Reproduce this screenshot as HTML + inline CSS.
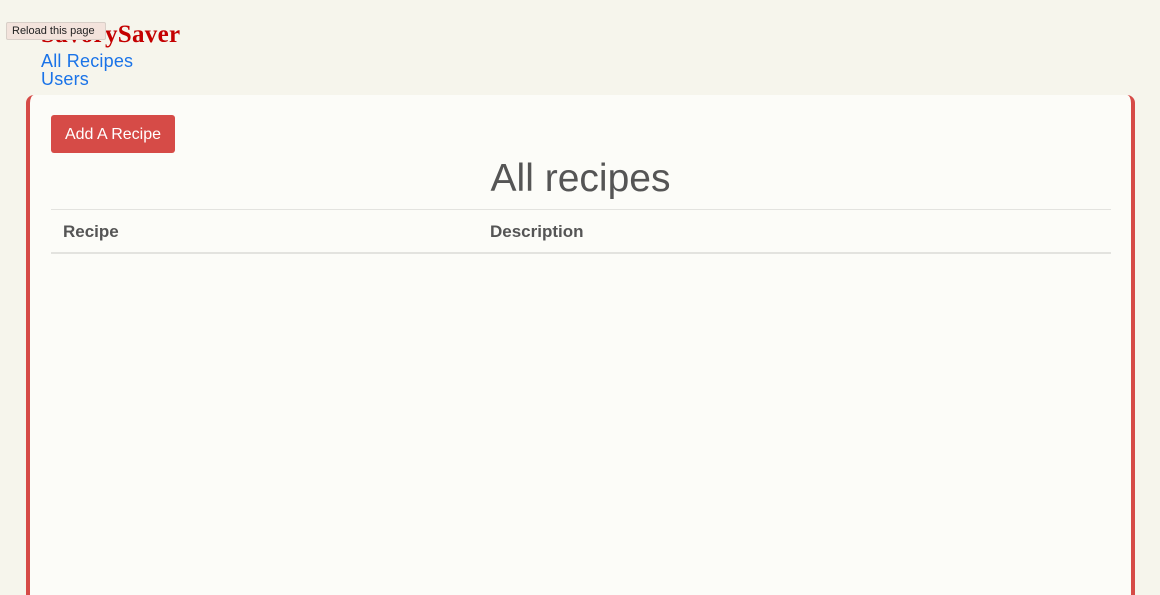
<!DOCTYPE html>
<html><head><style>
body{margin:0;width:1160px;height:576px;overflow:hidden;background:#f6f5ec;font-family:"Liberation Sans",sans-serif;position:relative}
.logo{position:absolute;left:41px;top:21px;font-family:"Liberation Serif",serif;font-weight:bold;font-size:25px;color:#c40000;letter-spacing:0.3px}
.tip{position:absolute;left:6px;top:22px;width:88px;background:#f3e3dc;border:1px solid #d8cfc8;font-size:11px;color:#222;padding:2px 5px;border-radius:2px;white-space:nowrap}
.nav{position:absolute;left:41px;top:52px;font-size:18px;color:#1a73e8;line-height:18px;letter-spacing:0.2px}
.card{position:absolute;left:26px;top:95px;width:1101px;height:500px;background:#fcfcf8;border-left:4px solid #d64b47;border-right:4px solid #d64b47;border-radius:8px 8px 0 0}
.btn{position:absolute;left:21px;top:20px;width:124px;height:38px;background:#d64b47;color:#fff;border-radius:3px;font-size:16px;line-height:39px;text-align:center}
h1{position:absolute;left:0;width:1101px;top:62px;margin:0;text-align:center;font-weight:normal;font-size:39px;color:#555}
.hr{position:absolute;left:21px;width:1060px;height:1px;background:#e3e3df}
.th{position:absolute;top:127px;font-size:17px;font-weight:bold;color:#555}
</style></head><body>
<div class="logo">SavorySaver</div>
<div class="tip">Reload this page</div>
<div class="nav">All Recipes<br>Users</div>
<div class="card">
<div class="btn">Add A Recipe</div>
<h1>All recipes</h1>
<div class="hr" style="top:114px"></div>
<div class="th" style="left:33px">Recipe</div>
<div class="th" style="left:460px">Description</div>
<div class="hr" style="top:157px;height:2px"></div>
</div>
</body></html>
